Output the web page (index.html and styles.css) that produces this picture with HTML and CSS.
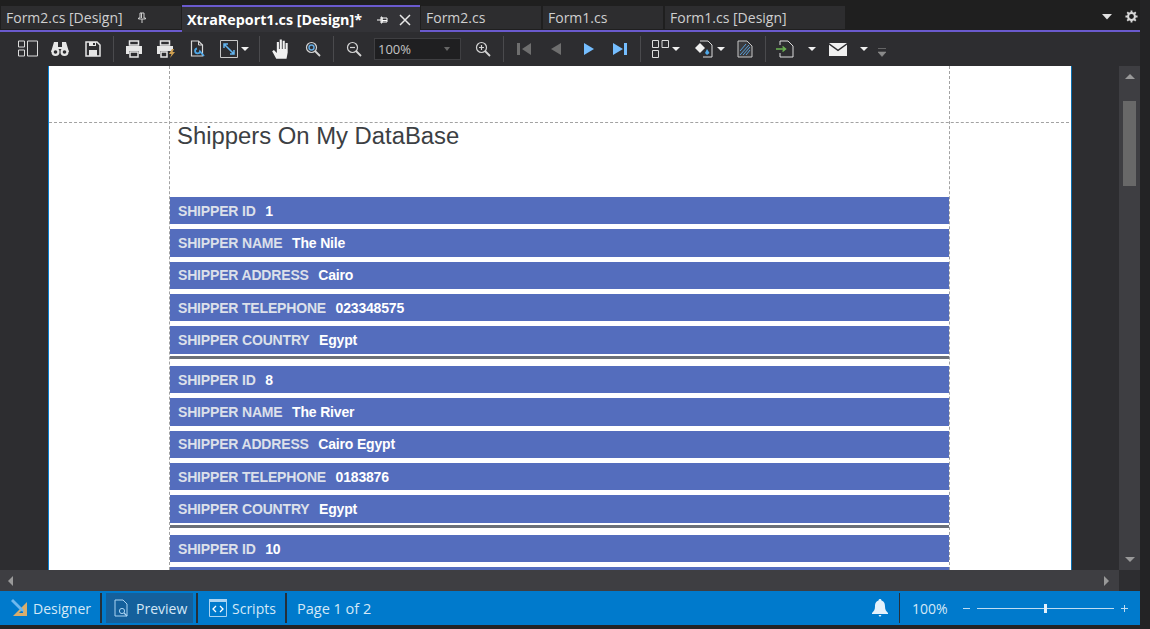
FILE: index.html
```html
<!DOCTYPE html>
<html lang="en">
<head>
<meta charset="UTF-8">
<meta name="viewport" content="width=device-width, initial-scale=1.0">
<title>XtraReport1.cs [Design]</title>
<link rel="stylesheet" href="styles.css">
</head>
<body>

<div class="window">

  <!-- document tabs -->
  <div class="tabstrip">
    <div class="tab tab-first">
      <span>Form2.cs [Design]</span>
      <svg class="tab-pin" width="10" height="12" viewBox="0 0 10 12"><path d="M3 1h4v5h1.500v1h-7v-1h1.500zM5 7v4M4.500 1v5" fill="none" stroke="#d0d0d0"/></svg>
    </div>
    <div class="tab tab-active">
      <span>XtraReport1.cs [Design]*</span>
      <svg class="tab-pin-h" width="12" height="10" viewBox="0 0 12 10"><path d="M1 5h4M5 2h1v6h-1zM6 3h5v4h-5zM6 5.500h5" fill="none" stroke="#fff"/></svg>
      <svg class="tab-close" width="12" height="12" viewBox="0 0 12 12"><path d="M1 1l10 10M11 1l-10 10" stroke="#e8e8e8" stroke-width="1.500"/></svg>
    </div>
    <div class="tab tab-code"><span>Form2.cs</span></div>
    <div class="tab tab-code"><span>Form1.cs</span></div>
    <div class="tab tab-last"><span>Form1.cs [Design]</span></div>
    <div class="tab-tools">
      <svg width="10" height="6" viewBox="0 0 10 6"><path d="M0 0h10l-5 5.500z" fill="#e0e0e0"/></svg>
      <svg width="13" height="13" viewBox="0 0 14 14"><circle cx="7" cy="7" r="3.700" fill="none" stroke="#d8d8d8" stroke-width="2.200"/><path d="M7 .5v2.500M7 11v2.500M.5 7h2.500M11 7h2.500M2.400 2.400l1.800 1.800M9.800 9.800l1.800 1.800M11.600 2.400l-1.800 1.800M4.200 9.800l-1.800 1.800" stroke="#d8d8d8" stroke-width="2"/></svg>
    </div>
  </div>

  <!-- preview toolbar -->
  <div class="toolbar">
    <span class="grip"></span>
    <button class="tb"><svg width="20" height="18" viewBox="0 0 20 18"><path d="M.5 1h6v6h-6zM.5 10h6v6h-6zM9.500 1h10v15h-10z" fill="none" stroke="#dcdcdc"/></svg></button>
    <button class="tb"><svg width="18" height="16" viewBox="0 0 18 16"><path d="M3 1h4v5h4v-5h4l3 10h-7v-3h-4v3h-7z" fill="#e6e6e6"/><circle cx="4.500" cy="11" r="4" fill="#e6e6e6"/><circle cx="13.500" cy="11" r="4" fill="#e6e6e6"/><circle cx="4.500" cy="11" r="1.800" fill="#2d2d30"/><circle cx="13.500" cy="11" r="1.800" fill="#2d2d30"/></svg></button>
    <button class="tb tb-save"><svg width="16" height="16" viewBox="0 0 16 16"><path d="M1 1h11l3 3v11h-14z" fill="none" stroke="#e6e6e6" stroke-width="1.500"/><path d="M4 1h7v4h-7zM4 9h8v6h-8z" fill="#e6e6e6"/><path d="M8 2h2v2h-2z" fill="#2d2d30"/></svg></button>
    <span class="sep"></span>
    <button class="tb"><svg width="18" height="18" viewBox="0 0 18 18"><path d="M4.500 1h9v4h-9z" fill="none" stroke="#e6e6e6" stroke-width="1.500"/><path d="M1 6h16v8h-3v-3h-10v3h-3z" fill="#e6e6e6"/><path d="M5 12h8v5h-8z" fill="none" stroke="#e6e6e6" stroke-width="1.500"/></svg></button>
    <button class="tb"><svg width="20" height="18" viewBox="0 0 20 18"><path d="M4.500 1h9v4h-9z" fill="none" stroke="#e6e6e6" stroke-width="1.500"/><path d="M1 6h16v5h-3v0h-10v3h-3z" fill="#e6e6e6"/><path d="M5 12h6v5h-6z" fill="none" stroke="#e6e6e6" stroke-width="1.500"/><path d="M16 9l-3 5h2.500l-1.500 4 5-6h-2.500l1.500-3z" fill="#d0a050"/></svg></button>
    <button class="tb"><svg width="16" height="18" viewBox="0 0 16 18"><path d="M1.500 1h7l4 4v11h-11z" fill="none" stroke="#d8d8d8" stroke-width="1.200"/><path d="M8.500 1v4h4" fill="none" stroke="#d8d8d8"/><path d="M7 8.500a2.500 2.500 0 1 0 3 3l4 4.500" fill="none" stroke="#4fa8e8" stroke-width="1.800"/></svg></button>
    <button class="tb tb-caret">
      <svg width="18" height="18" viewBox="0 0 18 18"><path d="M.5 .5h17v17h-17z" fill="none" stroke="#c8c8c8"/><path d="M4 4l10 10M4 8v-4h4M14 10v4h-4" fill="none" stroke="#62b4f0" stroke-width="1.500"/></svg>
      <i class="caret"></i>
    </button>
    <span class="sep sep-hand"></span>
    <button class="tb"><svg width="21" height="21" viewBox="0 1 17 18"><path d="M4 18l-3.500-6.500 1.500-1 2.500 2.500v-9.500h1.800v6h.7v-8h1.800v8h.7v-7h1.800v7h.7v-5h1.800v8l-1 5.500z" fill="#f0f0f0"/></svg></button>
    <button class="tb"><svg width="16" height="16" viewBox="0 0 16 16"><circle cx="6.500" cy="6.500" r="5" fill="none" stroke="#d4d4d4" stroke-width="1.200"/><circle cx="6.500" cy="6.500" r="2.500" fill="none" stroke="#62a8e0" stroke-width="1.500"/><path d="M10 10l5 5" stroke="#d4d4d4" stroke-width="1.800"/></svg></button>
    <span class="sep"></span>
    <button class="tb"><svg width="16" height="16" viewBox="0 0 16 16"><circle cx="6.500" cy="6.500" r="5" fill="none" stroke="#d4d4d4" stroke-width="1.200"/><path d="M4 6.500h5" stroke="#d4d4d4" stroke-width="1.200"/><path d="M10 10l5 5" stroke="#d4d4d4" stroke-width="1.800"/></svg></button>
    <div class="combo"><span>100%</span><i class="caret caret-dim"></i></div>
    <button class="tb tb-after-combo"><svg width="16" height="16" viewBox="0 0 16 16"><circle cx="6.500" cy="6.500" r="5" fill="none" stroke="#d4d4d4" stroke-width="1.200"/><path d="M4 6.500h5M6.500 4v5" stroke="#d4d4d4" stroke-width="1.200"/><path d="M10 10l5 5" stroke="#d4d4d4" stroke-width="1.800"/></svg></button>
    <span class="sep"></span>
    <button class="tb"><svg width="14" height="12" viewBox="0 0 14 12"><path d="M0 0h3v12h-3zM14 0v12l-9-6z" fill="#6e6e6e"/></svg></button>
    <button class="tb"><svg width="10" height="12" viewBox="0 0 10 12"><path d="M10 0v12l-10-6z" fill="#6e6e6e"/></svg></button>
    <button class="tb tb-next"><svg width="10" height="12" viewBox="0 0 10 12"><path d="M0 0v12l10-6z" fill="#75beff"/></svg></button>
    <button class="tb tb-last"><svg width="14" height="12" viewBox="0 0 14 12"><path d="M0 0v12l10-6zM11 0h3v12h-3z" fill="#75beff"/></svg></button>
    <span class="sep"></span>
    <button class="tb tb-caret tb-layout">
      <svg width="17" height="18" viewBox="0 0 17 18"><path d="M.5 .5h6v7h-6zM10 .5h6.500v7h-6.500zM.5 10.500h6v7h-6z" fill="none" stroke="#dcdcdc"/></svg>
      <i class="caret"></i>
    </button>
    <button class="tb tb-caret tb-fill">
      <svg width="20" height="18" viewBox="0 0 20 18"><path d="M6 1h8l4 4v12h-9" fill="none" stroke="#dcdcdc"/><path d="M6 3l5 5-5 5-5-5z" fill="#f0f0f0"/><path d="M13 9l2.500 4-2.500 2-2-2z" fill="#4fa8e8"/></svg>
      <i class="caret"></i>
    </button>
    <button class="tb"><svg width="16" height="18" viewBox="0 0 16 18"><path d="M1 1h9l5 5v11h-14z" fill="#3a3a3d" stroke="#c8c8c8"/><path d="M3 15l9-10M3 11l6-7M6 15l7-8M9 15l4-5" stroke="#5aa0d8"/></svg></button>
    <span class="sep"></span>
    <button class="tb tb-caret tb-export">
      <svg width="18" height="18" viewBox="0 0 18 18"><path d="M4 5v-4h8l5 5v11h-13v-4" fill="none" stroke="#dcdcdc"/><path d="M0 9h9M6.500 6.500l3 2.500-3 2.500" fill="none" stroke="#6cb352" stroke-width="1.500"/></svg>
      <i class="caret"></i>
    </button>
    <button class="tb tb-caret tb-mail">
      <svg width="18" height="13" viewBox="0 0 18 13"><path d="M0 0h18l-9 6.500z" fill="#f0f0f0"/><path d="M0 1.800v11.200h18v-11.200l-9 6.500z" fill="#f0f0f0"/></svg>
      <i class="caret"></i>
    </button>
    <svg class="overflow" width="8" height="9" viewBox="0 0 8 9"><path d="M0 .5h8M0 4h8l-4 4.500z" fill="#8a8a8a" stroke="#8a8a8a" stroke-width=".6"/></svg>
  </div>

  <!-- report page -->
  <div class="viewer">
    <div class="canvas">
      <div class="page">
        <div class="guide-h"></div>
        <div class="report">
          <div class="band-top"></div>
          <div class="report-title">Shippers On My DataBase</div>

          <div class="record">
            <div class="row"><span class="lbl">SHIPPER ID</span><span class="val">1</span></div>
            <div class="row"><span class="lbl">SHIPPER NAME</span><span class="val">The Nile</span></div>
            <div class="row"><span class="lbl">SHIPPER ADDRESS</span><span class="val">Cairo</span></div>
            <div class="row"><span class="lbl">SHIPPER TELEPHONE</span><span class="val">023348575</span></div>
            <div class="row"><span class="lbl">SHIPPER COUNTRY</span><span class="val">Egypt</span></div>
            <div class="rule"></div>
          </div>

          <div class="record">
            <div class="row"><span class="lbl">SHIPPER ID</span><span class="val">8</span></div>
            <div class="row"><span class="lbl">SHIPPER NAME</span><span class="val">The River</span></div>
            <div class="row"><span class="lbl">SHIPPER ADDRESS</span><span class="val">Cairo Egypt</span></div>
            <div class="row"><span class="lbl">SHIPPER TELEPHONE</span><span class="val">0183876</span></div>
            <div class="row"><span class="lbl">SHIPPER COUNTRY</span><span class="val">Egypt</span></div>
            <div class="rule"></div>
          </div>

          <div class="record">
            <div class="row"><span class="lbl">SHIPPER ID</span><span class="val">10</span></div>
            <div class="row"></div>
          </div>
        </div>
      </div>
    </div>
    <div class="vscroll">
      <svg width="10" height="5" viewBox="0 0 10 5"><path d="M5 0l5 5h-10z" fill="#999"/></svg>
      <div class="vthumb"></div>
      <svg width="10" height="5" viewBox="0 0 10 5"><path d="M0 0h10l-5 5z" fill="#999"/></svg>
    </div>
  </div>

  <div class="hscroll">
    <svg width="5" height="10" viewBox="0 0 5 10"><path d="M5 0v10l-5-5z" fill="#999"/></svg>
    <svg class="hscroll-right" width="5" height="10" viewBox="0 0 5 10"><path d="M0 0v10l5-5z" fill="#999"/></svg>
    <div class="corner"></div>
  </div>

  <!-- designer tabs and status -->
  <div class="statusbar">
    <div class="st-item st-designer">
      <svg width="18" height="18" viewBox="0 0 18 18"><path d="M17 3v14h-14z" fill="#d9ad6c"/><path d="M13 10v4h-4z" fill="#0079ce"/><path d="M1 2l2-2 10 10 1 3-3-1z" fill="#6fb8ee"/></svg>
      <span>Designer</span>
    </div>
    <span class="st-div"></span>
    <div class="st-item st-on">
      <svg width="16" height="18" viewBox="0 0 16 18"><path d="M1 1h8l4 4v12h-12z" fill="none" stroke="#a9d3f2"/><circle cx="8" cy="12" r="2.600" fill="none" stroke="#a9d3f2"/><path d="M10 14l3 3" stroke="#a9d3f2" stroke-width="1.300"/></svg>
      <span>Preview</span>
    </div>
    <span class="st-div"></span>
    <div class="st-item st-scripts">
      <svg width="18" height="18" viewBox="0 0 18 18"><path d="M.5 .5h17v17h-17z" fill="none" stroke="#a9d3f2"/><path d="M0 0h18v3h-18z" fill="#a9d3f2"/><path d="M7 7l-3 3 3 3M11 7l3 3-3 3" fill="none" stroke="#fff" stroke-width="1.300"/></svg>
      <span>Scripts</span>
    </div>
    <span class="st-div"></span>
    <div class="st-page">Page 1 of 2</div>
    <svg class="st-bell" width="16" height="18" viewBox="0 0 16 18"><path d="M8 0c1 0 1.500 .7 1.500 1.500 3 1 3.500 3.500 3.500 6 0 3 1 4.500 3 6.500v1h-16v-1c2-2 3-3.500 3-6.500 0-2.500 .5-5 3.500-6 0-.8 .5-1.500 1.500-1.500z" fill="#e4f1fb"/><path d="M6.500 16h3l-1.500 2z" fill="#e4f1fb"/></svg>
    <span class="st-div st-div-zoom"></span>
    <div class="st-zoom">100%</div>
    <div class="zoomer">
      <i class="z-minus"></i>
      <div class="z-track"><i class="z-knob"></i></div>
      <i class="z-plus"></i>
    </div>
  </div>

</div>

</body>
</html>
```

FILE: styles.css
```css
* {margin: 0; padding: 0; box-sizing: border-box;}
html, body {height: 100%; overflow: hidden;}
body {
  background: #232325;
  font-family: "Open Sans", "Noto Sans", sans-serif;
  color: #d8d8d8;
}
button {background: none; border: none; color: inherit;}
svg {display: block; flex: none;}

.window {display: flex; flex-direction: column; width: 1140px; height: 625px; background: #2d2d30;}

/* tabs */
.tabstrip {
  display: flex; height: 32px; padding-left: 1px; background: #1f1f1f;
  border-bottom: 2px solid #6a5acd; position: relative;
}
.tab {
  display: flex; align-items: center; height: 23px; margin-top: 6px; margin-right: 2px;
  padding-left: 5px; background: #2d2d2f; font-size: 14px; color: #cfcfcf;
}
.tab-first {width: 180px; margin-right: 1px;}
.tab-pin {margin-left: 14px;}
.tab-active {
  width: 238px; height: 27px; margin-top: 5px; margin-right: 1px; background: #333337;
  border-top: 2px solid #6a5acd; color: #fff; font-weight: 700; font-size: 14.3px;
}
.tab-pin-h {margin-left: 14px;}
.tab-close {margin-left: 11px;}
.tab-code {width: 120px;}
.tab-last {width: 180px;}
.tab-tools {display: flex; align-items: center; gap: 13px; position: absolute; right: 2px; top: 10px;}

/* toolbar */
.toolbar {display: flex; align-items: center; height: 34px; background: #2d2d30; flex: none;}
.grip {width: 12px; height: 18px;}
.tb {display: flex; align-items: center; justify-content: center; gap: 3px; width: 32px; height: 28px; flex: none;}
.tb-save {margin-left: 1px;}
.tb-caret {width: 40px;}
.caret {display: block; width: 0; height: 0; border-left: 4px solid transparent; border-right: 4px solid transparent; border-top: 4px solid #f0f0f0;}
.caret-dim {border-top-color: #666; border-left-width: 3.5px; border-right-width: 3.5px;}
.sep {width: 1px; height: 26px; margin: 0 4px; background: #4a4a4d; flex: none;}
.sep-hand {margin-left: 5px; margin-right: 5px;}
.combo {
  display: flex; align-items: center; justify-content: space-between; width: 87px; height: 22px;
  margin-left: 4px; padding: 0 10px 0 3px; background: #1f1f21; border: 1px solid #3f3f42; font-size: 13px; color: #c4c4c4;
}
.tb-after-combo {margin-left: 6px;}
.tb-next {margin-left: 1px;}
.tb-last {margin-left: -1px;}
.tb-layout {margin-left: 1px;}
.tb-fill {margin-left: 3px;}
.tb-export {width: 50px; gap: 14px; margin-left: 1px;}
.tb-mail {width: 50px; gap: 13px; margin-left: 2px;}
.overflow {margin-left: 5px; margin-top: 6px;}

/* page */
.viewer {display: flex; height: 504px; flex: none;}
.canvas {flex: 1; min-width: 0; overflow: hidden; padding-left: 48px; background: #2d2d30;}
.page {
  position: relative; width: 1024px; height: 504px; overflow: hidden; padding-left: 120px;
  background: #fff; border-left: 1px solid #0a7fd0; border-right: 1px solid #0a6fb0;
}
.guide-h {position: absolute; left: 0; right: 2px; top: 56px; border-top: 1px dashed #a2a2a2;}
.report {width: 781px; height: 504px; border-left: 1px dashed #a2a2a2; border-right: 1px dashed #a2a2a2;}
.band-top {height: 56px;}
.report-title {
  height: 75px; padding-left: 7px; font-family: "Liberation Sans", Arial, sans-serif;
  font-size: 23.85px; line-height: 28px; color: #3c4043;
}
.record {height: 169px;}
.row {
  display: flex; align-items: center; height: 27.4px; margin-bottom: 4.9px; padding-left: 8px;
  background: #546dbd; font-family: "Liberation Sans", Arial, sans-serif; font-size: 14px; font-weight: 700;
  letter-spacing: -.17px;
}
.lbl {color: #dce0ea; margin-right: 9.5px;}
.val {color: #fff;}
.rule {height: 2.5px; margin-top: -2.300px; background: #6b7078;}

/* scrollbars */
.vscroll {
  display: flex; flex-direction: column; align-items: center; width: 21px; background: #3e3e42;
  padding-top: 8px; padding-bottom: 8px; flex: none;
}
.vthumb {width: 13px; height: 85px; margin-top: 22px; margin-bottom: auto; background: #686868;}
.hscroll {display: flex; align-items: center; height: 21px; padding-left: 8px; background: #3e3e42; flex: none;}
.hscroll-right {margin-left: auto; margin-right: 10px;}
.corner {width: 21px; height: 21px; background: #2d2d30;}

/* status bar */
.statusbar {
  display: flex; align-items: center; height: 34px; background: #007acc; flex: none; font-size: 14px; color: #d4e8f7;
}
.st-item {display: flex; align-items: center; gap: 5px; height: 30px;}
.st-designer {width: 100px; padding-left: 10px;}
.st-on {width: 87px; margin: 0 3px 0 4px; padding-left: 8px; background: #14609c; gap: 6px;}
.st-scripts {width: 87px; padding-left: 11px;}
.st-div {width: 2px; height: 30px; background: #25303a; flex: none;}
.st-page {margin-left: 10px; font-size: 14.5px;}
.st-bell {margin-left: auto; margin-right: 11px;}
.st-div-zoom {width: 1px;}
.st-zoom {margin-left: 12px; width: 51px;}
.zoomer {display: flex; align-items: center; width: 177px; padding-right: 12px;}
.z-minus {display: block; width: 7px; height: 1px; background: #bfdcf2;}
.z-track {position: relative; width: 137px; height: 1px; margin: 0 7px; background: #bfdcf2;}
.z-knob {position: absolute; left: 67px; top: -4px; width: 3px; height: 9px; background: #e4f1fb;}
.z-plus {position: relative; display: block; width: 7px; height: 1px; background: #bfdcf2;}
.z-plus::after {content: ""; position: absolute; left: 3px; top: -3px; width: 1px; height: 7px; background: #bfdcf2;}
```
